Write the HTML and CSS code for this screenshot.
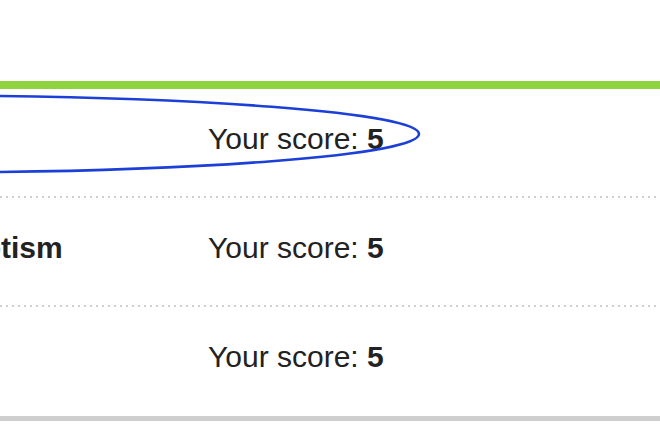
FILE: index.html
```html
<!DOCTYPE html>
<html>
<head>
<meta charset="utf-8">
<link rel="stylesheet" href="styles.css">
</head>
<body>
<div class="page">
  <div class="scores">
    <div class="row">
      <div class="label">Trust</div>
      <div class="score">Your score: <b>5</b></div>
    </div>
    <div class="row">
      <div class="label">Patriotism</div>
      <div class="score">Your score: <b>5</b></div>
    </div>
    <div class="row last">
      <div class="label">Pride</div>
      <div class="score">Your score: <b>5</b></div>
    </div>
  </div>
  <svg class="mark" width="660" height="440" viewBox="0 0 660 440">
    <ellipse cx="-84" cy="134" rx="503" ry="38.5" fill="none" stroke="#1c3fd8" stroke-width="2.6"/>
  </svg>
</div>
</body>
</html>
```

FILE: styles.css
```css
html, body {
  margin: 0;
  padding: 0;
  background: #fff;
  overflow: hidden;
}
.page {
  position: relative;
  width: 660px;
  height: 440px;
  overflow: hidden;
  padding-top: 81px;
  box-sizing: border-box;
}
.scores {
  margin-left: -84px;
  width: 820px;
  border-top: 8px solid #8fd43f;
  border-bottom: 5px solid #cfcfcf;
  font-family: "Liberation Sans", Arial, Helvetica, sans-serif;
  font-size: 30px;
  line-height: 34px;
  color: #222;
}
.row {
  display: flex;
  padding: 33px 0 42px;
  background-image: repeating-linear-gradient(to right, #cfcfcf 0 2px, transparent 2px 6px);
  background-size: 100% 2px;
  background-repeat: no-repeat;
  background-position: left bottom;
}
.row.last {
  background-image: none;
}
.label {
  width: 292px;
  font-weight: bold;
}
.score b {
  font-weight: bold;
}
.mark {
  position: absolute;
  left: 0;
  top: 0;
  pointer-events: none;
}
```
